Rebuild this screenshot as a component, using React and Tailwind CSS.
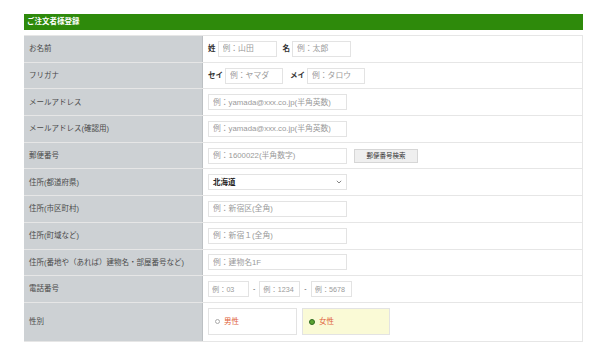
import React from 'react'

const font = { fontFamily: '"Liberation Sans", "Noto Sans CJK JP", "Noto Sans", sans-serif' }

function Field({ placeholder, w = 'w-[139px]', small }) {
  return (
    <input
      className={`${w} h-[16px] border border-[#e3e3e3] bg-white outline-none placeholder:text-[#9a9a9a] ${small ? 'px-[3px] text-[7.2px]' : 'px-[4px] text-[7.8px]'}`}
      placeholder={placeholder}
    />
  )
}

function Row({ label, children, tall }) {
  return (
    <div className={`grid grid-cols-[179px_1fr] border-b border-[#e6e6e6] ${tall ? 'h-[39px]' : 'h-[26.7px]'}`}>
      <div className="flex items-center bg-[#cdd1d4] border-r border-[#bcc0c3] pl-[5px] text-[7.5px] text-[#4a4a4a]">{label}</div>
      <div className="flex items-center pl-[5px] bg-white">{children}</div>
    </div>
  )
}

export default function App() {
  return (
    <div className="w-[602px] h-[356px] bg-white pt-[14px] pl-[24px]" style={font}>
      <div className="w-[559px]">
        {/* header */}
        <div className="h-[16px] bg-[#2e8a0b] flex items-center px-[3px] text-[7.5px] font-bold text-white">ご注文者様登録</div>

        <div className="mt-[5px] border-t border-r border-[#e6e6e6]">
          <Row label="お名前">
            <span className="text-[7.5px] font-bold text-[#333] mr-[2px]">姓</span>
            <Field placeholder="例：山田" w="w-[59px]" />
            <span className="text-[7.5px] font-bold text-[#333] ml-[6px] mr-[2px]">名</span>
            <Field placeholder="例：太郎" w="w-[59px]" />
          </Row>
          <Row label="フリガナ">
            <span className="text-[7.5px] font-bold text-[#333] mr-[2px]">セイ</span>
            <Field placeholder="例：ヤマダ" w="w-[58px]" />
            <span className="text-[7.5px] font-bold text-[#333] ml-[7px] mr-[2px]">メイ</span>
            <Field placeholder="例：タロウ" w="w-[58px]" />
          </Row>
          <Row label="メールアドレス">
            <Field placeholder="例：yamada@xxx.co.jp(半角英数)" />
          </Row>
          <Row label="メールアドレス(確認用)">
            <Field placeholder="例：yamada@xxx.co.jp(半角英数)" />
          </Row>
          <Row label="郵便番号">
            <Field placeholder="例：1600022(半角数字)" />
            <button className="ml-[7px] h-[14px] w-[64px] border border-[#d6d6d6] bg-[#efefef] text-[6.5px] text-[#333]">郵便番号検索</button>
          </Row>
          <Row label="住所(都道府県)">
            <div className="w-[139px] h-[16px] border border-[#e3e3e3] bg-white flex items-center justify-between px-[4px]">
              <span className="text-[7.5px] font-bold text-[#222]">北海道</span>
              <svg width="6" height="4" viewBox="0 0 6 4" fill="none">
                <path d="M0.8 0.8 L3 3 L5.2 0.8" stroke="#666" strokeWidth="0.8" />
              </svg>
            </div>
          </Row>
          <Row label="住所(市区町村)">
            <Field placeholder="例：新宿区(全角)" />
          </Row>
          <Row label="住所(町域など)">
            <Field placeholder="例：新宿１(全角)" />
          </Row>
          <Row label="住所(番地や（あれば）建物名・部屋番号など)">
            <Field placeholder="例：建物名1F" />
          </Row>
          <Row label="電話番号">
            <Field placeholder="例：03" w="w-[41px]" small />
            <span className="mx-[4px] text-[7px] text-[#555]">-</span>
            <Field placeholder="例：1234" w="w-[41px]" small />
            <span className="mx-[4px] text-[7px] text-[#555]">-</span>
            <Field placeholder="例：5678" w="w-[41px]" small />
          </Row>
          <Row label="性別" tall>
            <div className="flex gap-[5px]">
              <label className="w-[89px] h-[27px] border border-[#e3e3e3] bg-white flex items-center pl-[6px] gap-[4px]">
                <span className="w-[5px] h-[5px] rounded-full border border-[#aaa] bg-white" />
                <span className="text-[7.5px] text-[#e0603a]">男性</span>
              </label>
              <label className="w-[88px] h-[27px] border border-[#e3e3e3] bg-[#fafad6] flex items-center pl-[6px] gap-[4px]">
                <span className="w-[6px] h-[6px] rounded-full border border-[#2f6b1f] bg-[#5aa332]" />
                <span className="text-[7.5px] text-[#e0603a]">女性</span>
              </label>
            </div>
          </Row>
        </div>
      </div>
    </div>
  )
}
